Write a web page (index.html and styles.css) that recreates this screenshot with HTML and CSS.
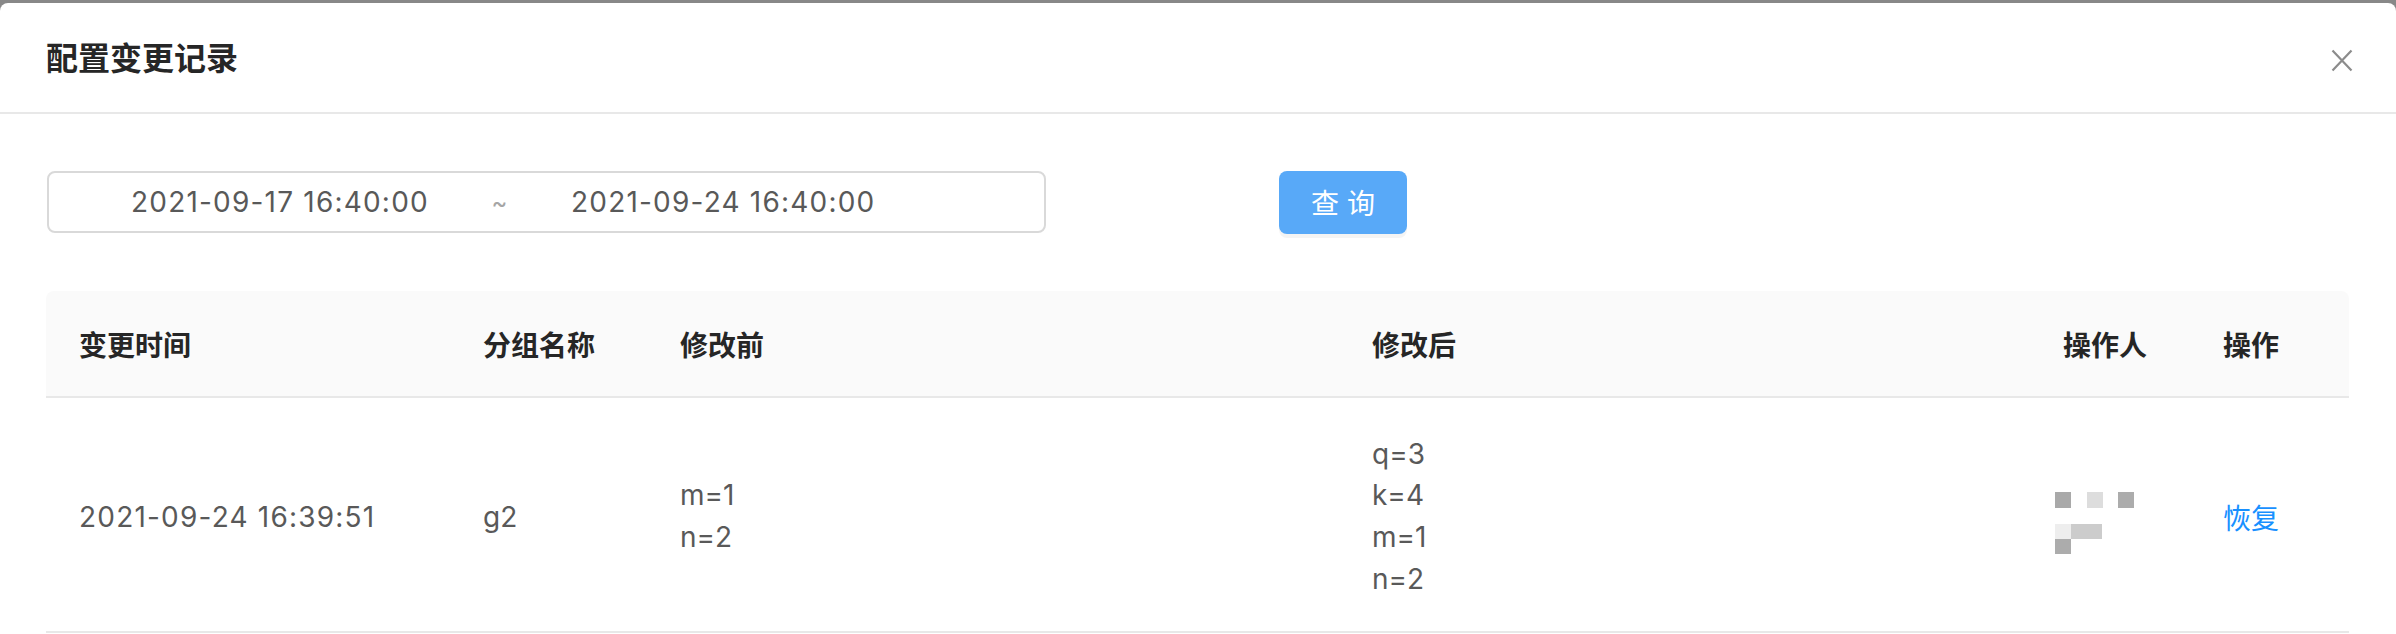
FILE: index.html
```html
<!DOCTYPE html>
<html lang="zh-CN">
<head>
<meta charset="utf-8">
<title>配置变更记录</title>
<link rel="stylesheet" href="styles.css">
</head>
<body>
<div class="modal">
  <div class="modal-header">
    <div class="modal-title">配置变更记录</div>
    <button class="modal-close" aria-label="关闭">
      <svg width="22" height="23" viewBox="0 0 22 23"><path d="M1.5 1.5 L20.5 21.5 M20.5 1.5 L1.5 21.5" stroke="#8c8c8c" stroke-width="2.2" fill="none"/></svg>
    </button>
  </div>
  <div class="modal-body">
    <div class="toolbar">
      <div class="range-picker">
        <span class="range-input">2021-09-17 16:40:00</span>
        <span class="range-sep">~</span>
        <span class="range-input">2021-09-24 16:40:00</span>
      </div>
      <button class="btn-primary">查 询</button>
    </div>
    <div class="table">
      <div class="row head">
        <div class="cell">变更时间</div>
        <div class="cell">分组名称</div>
        <div class="cell">修改前</div>
        <div class="cell">修改后</div>
        <div class="cell">操作人</div>
        <div class="cell">操作</div>
      </div>
      <div class="row body">
        <div class="cell date">2021-09-24 16:39:51</div>
        <div class="cell">g2</div>
        <div class="cell"><div class="kv"><div>m=1</div><div>n=2</div></div></div>
        <div class="cell"><div class="kv"><div>q=3</div><div>k=4</div><div>m=1</div><div>n=2</div></div></div>
        <div class="cell">
          <svg class="avatar" width="80" height="62" viewBox="0 0 80 62">
            <rect x="0" y="0" width="16" height="16" fill="#a9a9a9"/>
            <rect x="32" y="0" width="16" height="16" fill="#dddddd"/>
            <rect x="63" y="0" width="16" height="16" fill="#acacac"/>
            <rect x="0" y="32" width="16" height="15" fill="#eeeeee"/>
            <rect x="16" y="32" width="31" height="15" fill="#cccccc"/>
            <rect x="0" y="47" width="16" height="15" fill="#acacac"/>
          </svg>
        </div>
        <div class="cell"><a class="link" href="#">恢复</a></div>
      </div>
    </div>
  </div>
</div>
</body>
</html>
```
FILE: styles.css
```css
html, body {
  margin: 0;
  padding: 0;
}
body {
  background: #888888;
  font-family: Inter, "Noto Sans CJK SC", sans-serif;
  color: #595959;
  padding-top: 3px;
  height: 631px;
  overflow: hidden;
}
.modal {
  background: #ffffff;
  border-radius: 8px 8px 0 0;
  height: 631px;
}
.modal-header {
  box-sizing: border-box;
  height: 111px;
  padding: 2px 43px 0 46px;
  border-bottom: 2px solid #e8e8e8;
  display: flex;
  align-items: center;
  justify-content: space-between;
}
.modal-title {
  font-size: 32px;
  font-weight: 600;
  color: #262626;
  line-height: 44px;
}
.modal-close {
  border: 0;
  background: none;
  padding: 0;
  margin-top: 3px;
  width: 22px;
  height: 23px;
  display: flex;
}
.modal-body {
  padding: 56px 47px 0 46px;
}
.toolbar {
  display: flex;
  align-items: center;
  height: 64px;
}
.range-picker {
  box-sizing: border-box;
  width: 999px;
  height: 62px;
  margin-left: 1px;
  border: 2px solid #d9d9d9;
  border-radius: 8px;
  display: flex;
  align-items: center;
  padding-left: 82px;
  font-size: 28px;
  color: #595959;
}
.range-input {
  width: 297px;
  white-space: nowrap;
  letter-spacing: 1.2px;
}
.range-sep {
  width: 143px;
  text-align: center;
  color: #a6a6a6;
  font-size: 24px;
}
.btn-primary {
  margin-left: 233px;
  width: 128px;
  height: 63px;
  border: 0;
  border-radius: 8px;
  background: #58a9f8;
  color: #ffffff;
  font-family: Inter, "Noto Sans CJK SC", sans-serif;
  font-size: 28px;
  padding: 0;
  box-shadow: 0 4px 0 rgba(0, 0, 0, 0.045);
}
.table {
  margin-top: 57px;
  width: 2303px;
}
.row {
  display: grid;
  grid-template-columns: 404px 197px 692px 691px 160px 159px;
  box-sizing: border-box;
  border-bottom: 2px solid #e8e8e8;
}
.row.head {
  height: 107px;
  background: #fafafa;
  border-radius: 8px 8px 0 0;
  font-size: 28px;
  font-weight: 600;
  color: #262626;
}
.row.body {
  height: 235px;
  padding-top: 5px;
  font-size: 28px;
  color: #595959;
}
.cell {
  padding-left: 33px;
  display: flex;
  align-items: center;
  white-space: nowrap;
}
.cell.date {
  letter-spacing: 1.2px;
}
.kv {
  font-size: 28px;
  line-height: 41.67px;
}
.avatar {
  margin-left: -8px;
  margin-top: 12px;
}
.link {
  color: #1890ff;
  text-decoration: none;
}
```
